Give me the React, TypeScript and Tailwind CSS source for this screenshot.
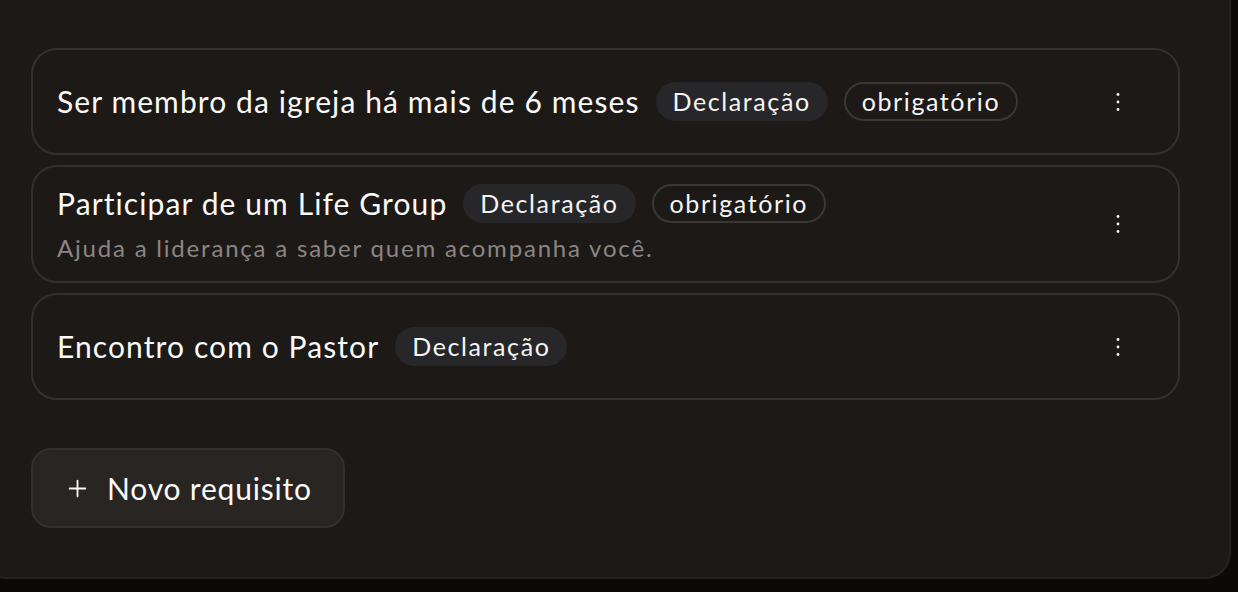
import { Plus } from "lucide-react";

type Req = { title: string; desc?: string; required?: boolean };

const reqs: Req[] = [
  { title: "Ser membro da igreja há mais de 6 meses", required: true },
  { title: "Participar de um Life Group", desc: "Ajuda a liderança a saber quem acompanha você.", required: true },
  { title: "Encontro com o Pastor" },
];

function Kebab() {
  return (
    <button className="flex h-10 w-10 shrink-0 items-center justify-center rounded-full text-stone-100">
      <svg width="6" height="24" viewBox="0 0 6 24" fill="currentColor">
        <circle cx="3" cy="4.5" r="1.4" />
        <circle cx="3" cy="12" r="1.4" />
        <circle cx="3" cy="19.5" r="1.4" />
      </svg>
    </button>
  );
}

function Card({ r }: { r: Req }) {
  return (
    <div className="flex min-h-[107px] items-center rounded-[26px] border-2 border-[#33302e] py-[17px] pl-[24px] pr-[40px]">
      <div className="flex-1">
        <div className="flex items-center gap-4">
          <span className="text-[30px] leading-[39px] tracking-[1.1px] text-stone-50">{r.title}</span>
          <span className="rounded-full bg-[#27272a] px-[17px] text-[25px] leading-[39px] tracking-[1.6px] text-stone-100">
            Declaração
          </span>
          {r.required && (
            <span className="rounded-full border-2 border-[#3a3735] px-4 text-[25px] leading-[35px] tracking-[1.6px] text-stone-100">
              obrigatório
            </span>
          )}
        </div>
        {r.desc && (
          <div className="mt-[8px] text-[24px] leading-[33px] tracking-[1.8px] text-[#8b8684]">{r.desc}</div>
        )}
      </div>
      <Kebab />
    </div>
  );
}

export default function App() {
  return (
    <div className="min-h-screen bg-[#0b0a09]" style={{ fontFamily: "Lato, 'Noto Sans', sans-serif" }}>
      <div className="-ml-5 w-[1251px] rounded-b-[26px] border-b-2 border-r-2 border-[#272321] bg-[#1c1917] pb-[49px] pl-[51px] pr-[49px] pt-12">
        <div className="flex flex-col gap-[10px]">
          {reqs.map((r) => (
            <Card key={r.title} r={r} />
          ))}
        </div>
        <button className="mt-[48px] flex h-[80px] items-center gap-[16px] rounded-[20px] border-2 border-[#33302e] bg-[#282523] pl-[31px] pr-[31px] text-[30px] tracking-[0.8px] text-stone-50">
          <Plus size={27} strokeWidth={1.6} />
          Novo requisito
        </button>
      </div>
    </div>
  );
}
